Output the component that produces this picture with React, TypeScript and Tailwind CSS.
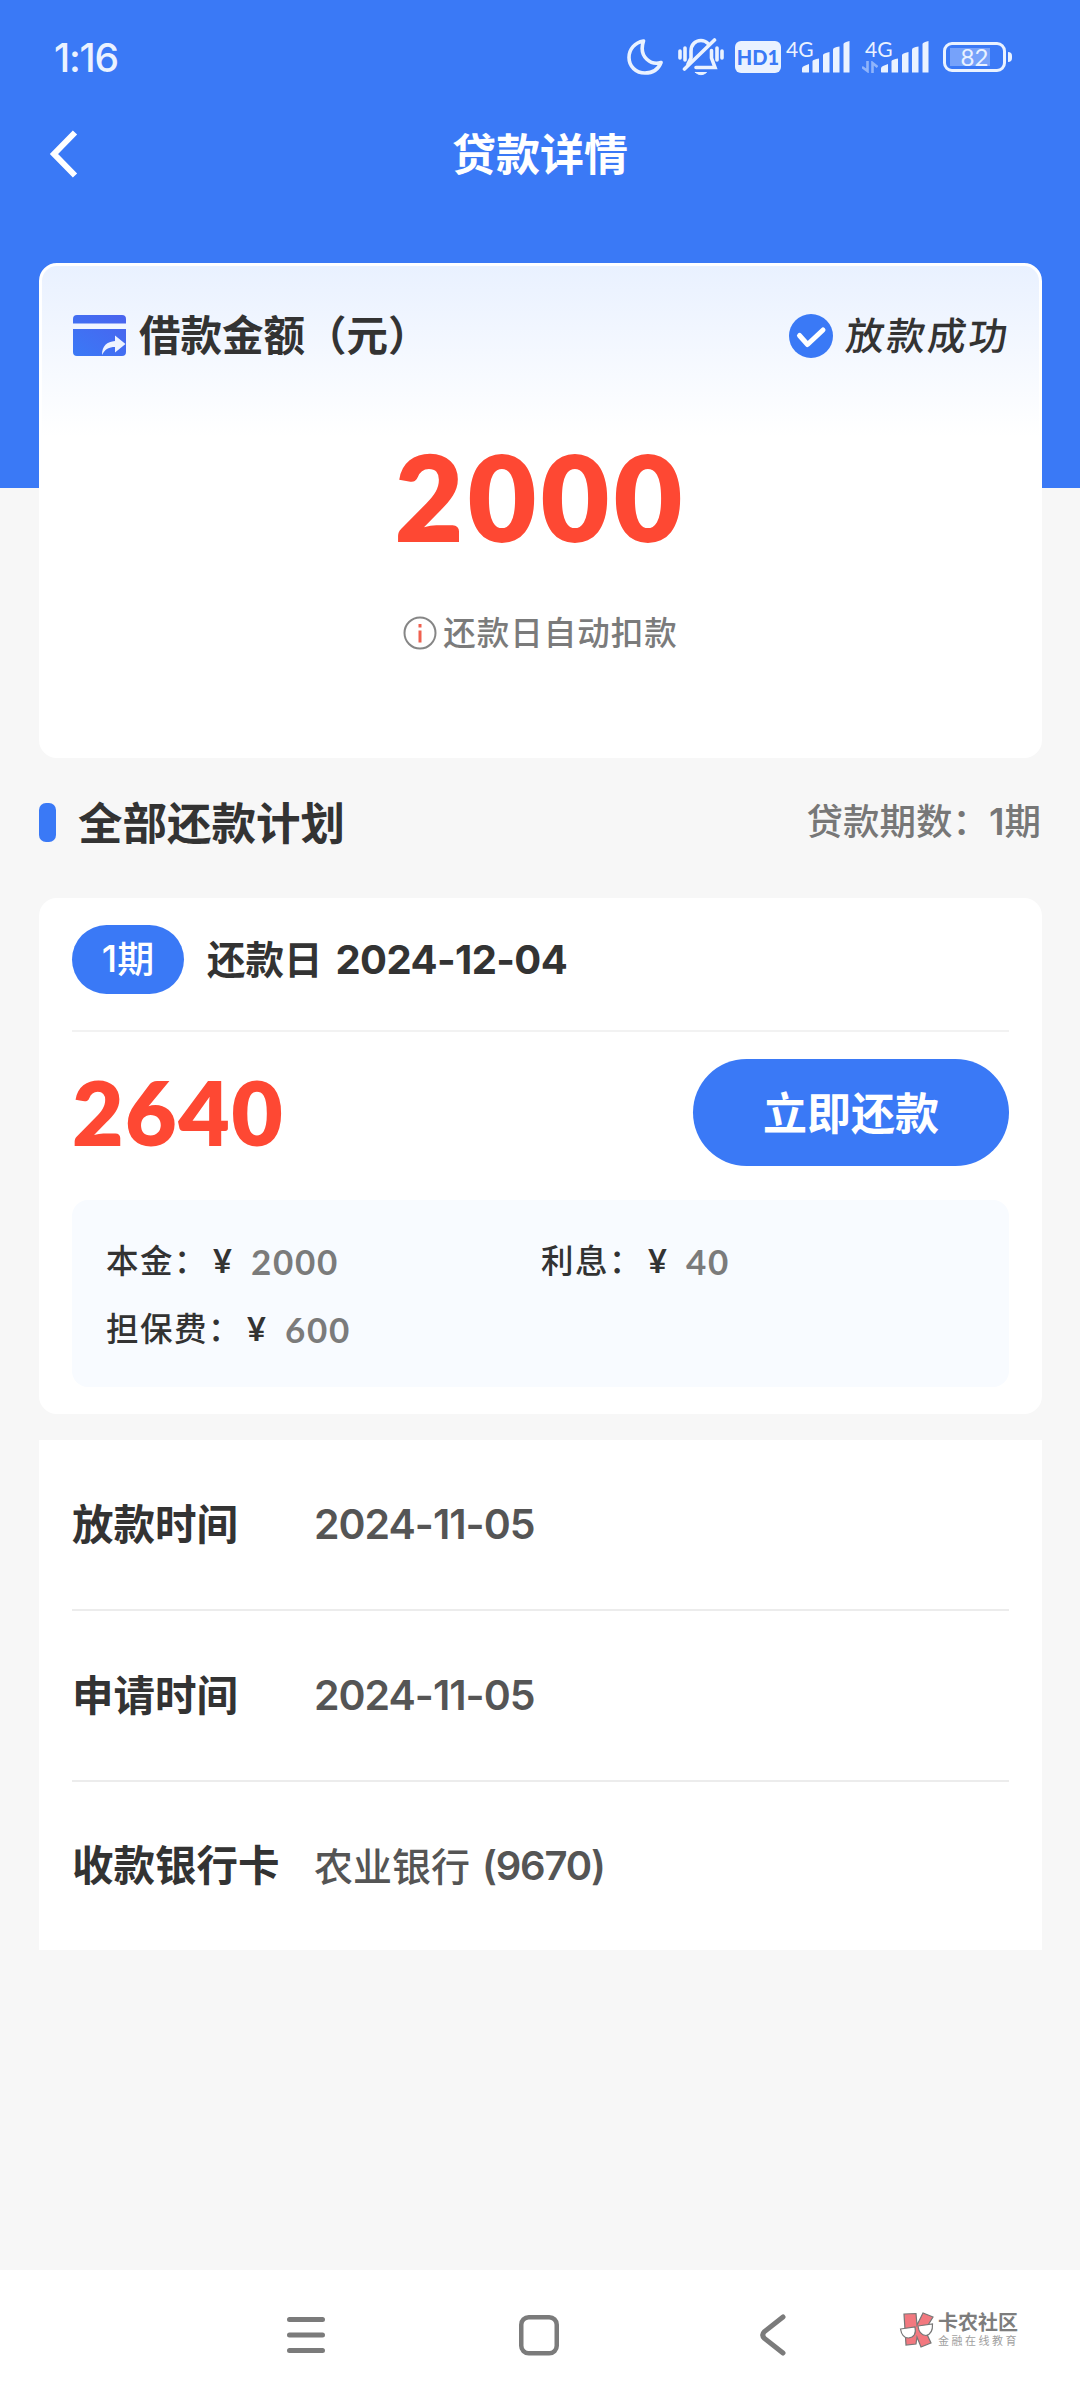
import React from "react";

const fees = [
  { label: "本金", value: "2000" },
  { label: "利息", value: "40" },
  { label: "担保费", value: "600" },
];

const infos = [
  { label: "放款时间", value: "2024-11-05" },
  { label: "申请时间", value: "2024-11-05" },
];

const Signal = () => (
  <svg width="48" height="32" viewBox="0 0 48 32" fill="#eaf2ff">
    <path d="M0 31V27.500Q0 25.500 2 25L7 23V31Q7 31.500 6.500 31.500H.5Z" />
    <path d="M10.500 31.500V20Q11 18.500 17 17.500V31.500Z" />
    <path d="M21 31.500V14Q21 12.500 27.500 11V31.500Z" />
    <path d="M31 31.500V8.500Q31 6.500 37.500 5.500V31.500Z" />
    <path d="M41.500 31.500V3Q41.500 1.500 47.500 0V31.500Z" />
  </svg>
);

const StatusBar = () => {
  return (
    <div className="flex items-center h-[114px] pl-[54px] pr-[68px] text-[#eaf2ff]">
      <span className="font-['Inter'] text-[39px] leading-none font-medium tracking-[-1.200px]">1:16</span>
      <div className="flex items-center ml-auto">
        <svg width="36" height="36" viewBox="0 0 36 36" fill="none" stroke="#eaf2ff" strokeWidth="3.600" strokeLinejoin="round">
          <path d="M16.500 2C8 3.500 2 10 2 18.500C2 27.500 9 34 18 34C25.500 34 31.500 30 34 23.500C25 26.500 11 19 16.500 2Z" />
        </svg>
        <svg className="ml-[15px]" width="46" height="38" viewBox="0 0 46 38" fill="none" stroke="#eaf2ff" strokeWidth="3.600" strokeLinecap="round">
          <path d="M2 13V20M7 10V22M39 10V22M44 13V20" />
          <path d="M13 20V13C13 7 17 2.500 23 2.500C26 2.500 28 3.500 30 5.500M33.500 12.500V20L37 29.500H18M13 20L10 26" />
          <path d="M6.500 31L36.500 2" />
          <path d="M17.500 34.500H28.500Q23 39 17.500 34.500Z" fill="#eaf2ff" strokeWidth="1" />
        </svg>
        <span className="flex items-center justify-center ml-[11px] w-[46px] h-[32px] rounded-[6px] bg-[#eaf2ff] text-[#3a79f6] text-[20px] leading-none font-black">HD1</span>
        <div className="relative ml-[21px] h-[32px]">
          <span className="absolute left-[-16px] top-[-3px] text-[21px] leading-none">4G</span>
          <Signal />
        </div>
        <div className="relative ml-[31px] h-[32px]">
          <span className="absolute left-[-16px] top-[-3px] text-[21px] leading-none">4G</span>
          <svg className="absolute left-[-19px] top-[20px]" width="16" height="12" viewBox="0 0 16 12" fill="none" stroke="#8fb4fb" strokeWidth="2.600">
            <path d="M0 6L5.500 10V0M15.500 6L10.500 2V12" />
          </svg>
          <Signal />
        </div>
        <div className="relative flex items-center justify-center ml-[14px] w-[63px] h-[30px] border-[3px] border-[#eaf2ff] rounded-[9px]">
          <span className="absolute left-[4px] top-[3px] w-[40px] h-[18px] bg-[#76a2fa]" />
          <span className="relative text-[24px] leading-none">82</span>
        </div>
        <span className="w-[4px] h-[10px] ml-[2px] rounded-r bg-[#eaf2ff]" />
      </div>
    </div>
  );
};

const NavBar = () => {
  return (
    <div className="relative flex items-center h-[130px] bg-white">
      <svg className="ml-[286px]" width="40" height="38" viewBox="0 0 40 38" stroke="#7b7b7b" strokeWidth="5" strokeLinecap="round">
        <path d="M3.500 3.500H36.500M3.500 19H36.500M3.500 34.500H36.500" />
      </svg>
      <svg className="ml-[192px]" width="42" height="42" viewBox="0 0 42 42" fill="none" stroke="#7b7b7b" strokeWidth="4.500">
        <rect x="3.250" y="3.250" width="35.500" height="36" rx="7.500" />
      </svg>
      <svg className="ml-[199px]" width="28" height="42" viewBox="0 0 28 42" fill="none" stroke="#7b7b7b" strokeWidth="5" strokeLinecap="round">
        <path d="M24 3L5.500 17.500Q2 21 5.500 24.500L24 39" />
      </svg>
      <div className="absolute left-[899px] top-[42px] flex">
        <svg width="36" height="37" viewBox="0 0 36 37" stroke="#777" strokeWidth="1.200">
          <path d="M5 2L17 1.500L18 13L24 1L34 5L26 18L32 31L22 35L18 25L17 32L7 33Z" fill="#f2787f" />
          <path d="M1.500 17L16 15Q18 25 9.500 26Q3 26 1.500 17ZM19 14L33.500 12Q34 22 27 23.500Q20 23 19 14Z" fill="#fff" />
        </svg>
        <div className="flex flex-col ml-[3px]">
          <span className="text-[20px] leading-[20px] font-bold text-[#7d7d7d] whitespace-nowrap">卡农社区</span>
          <span className="mt-[2px] text-[11px] leading-[13px] tracking-[2.500px] text-[#a0a0a0] whitespace-nowrap">金融在线教育</span>
        </div>
      </div>
    </div>
  );
};

const App = () => {
  return (
    <div className="flex flex-col w-[1080px] h-[2400px] bg-[#f7f7f7] text-[#333] font-['Lato','Noto_Sans_CJK_SC',sans-serif]">
      <div className="h-[488px] bg-[#3a79f6]">
        <StatusBar />
        <div className="grid grid-cols-3 items-center h-[80px] text-white">
          <svg className="ml-[48px]" width="32" height="50" viewBox="0 0 32 50" fill="none" stroke="#fff" strokeWidth="6">
            <path d="M27 3.500L6 25L27 46.500" />
          </svg>
          <h1 className="text-[44px] leading-none font-bold text-center">贷款详情</h1>
        </div>

        <div className="mx-[39px] mt-[69px] h-[495px] w-[1003px] rounded-[18px] border-[3px] border-white bg-white bg-linear-to-b from-[#e9f1ff] to-white to-35%">
          <div className="flex items-center h-[139px] pl-[31px] pr-[29px]">
            <svg width="53" height="41" viewBox="0 0 53 41">
              <defs>
                <linearGradient id="wallet" x1="0" y1="1" x2="1" y2="0">
                  <stop offset="0" stopColor="#3a79f6" />
                  <stop offset="1" stopColor="#4a63ee" />
                </linearGradient>
              </defs>
              <path d="M4 0H49Q53 0 53 4V8.500H0V4Q0 0 4 0ZM0 14H53V37Q53 41 49 41H4Q0 41 0 37Z" fill="url(#wallet)" />
              <path d="M29 40C29 31 34 26.500 42 26V20.500L52.500 29L42 37.500V32C36 32 32 34 29 40Z" fill="#edf3ff" />
            </svg>
            <span className="ml-[13px] text-[41.500px] leading-none font-bold">借款金额（元）</span>
            <svg className="ml-auto" width="44" height="44" viewBox="0 0 44 44">
              <circle cx="22" cy="22" r="22" fill="#3a79f6" />
              <path d="M10.500 21.500L18.500 30.500L34 16" fill="none" stroke="#fff" strokeWidth="5" strokeLinecap="round" strokeLinejoin="round" />
            </svg>
            <span className="ml-[13px] text-[38.500px] leading-none font-medium tracking-[2.500px] -skew-x-6">放款成功</span>
          </div>
          <div className="mt-[31px] text-[119px] leading-[120px] font-extrabold text-center tabular-nums tracking-[4px] text-[#fe4833]">2000</div>
          <div className="flex items-center justify-center mt-[60px] text-[32.500px] leading-none font-medium tracking-[1px] text-[#7b7b7b]">
            <svg className="mr-[6px]" width="34" height="34" viewBox="0 0 34 34" fill="none">
              <circle cx="17" cy="17" r="15.500" stroke="#868686" strokeWidth="2" />
              <path d="M17 14.500V26.500M17 8V11.500" stroke="#f0604f" strokeWidth="3" />
            </svg>
            还款日自动扣款
          </div>
        </div>
      </div>

      <div className="flex items-center h-[140px] mt-[270px] pl-[39px] pr-[39px]">
        <span className="w-[17px] h-[39px] mb-[11px] rounded-[7px] bg-[#3a79f6]" />
        <h2 className="ml-[22px] mb-[9px] text-[44.500px] leading-none font-bold">全部还款计划</h2>
        <span className="ml-auto mb-[13px] text-[36.500px] leading-none font-medium text-[#777]">
          贷款期数：<span className="font-['Inter'] font-semibold">1</span>期
        </span>
      </div>

      <div className="ml-[39px] mr-[38px] h-[516px] px-[33px] rounded-[18px] bg-white">
        <div className="flex items-center h-[134px] pb-[10px] border-b-2 border-[#f2f2f2]">
          <span className="flex items-center justify-center w-[112px] h-[69px] pb-[2px] rounded-full bg-[#3a79f6] text-white text-[37px] leading-none font-medium">
            <span className="font-['Inter']">1</span>期
          </span>
          <span className="ml-[23px] text-[38.500px] leading-none font-bold">还款日</span>
          <span className="ml-[13px] mt-[2px] font-['Inter'] text-[40px] leading-none font-bold tracking-[-0.600px]">2024-12-04</span>
        </div>
        <div className="flex items-center justify-between h-[168px] pb-[7px]">
          <span className="mt-[-3px] text-[89px] leading-none font-extrabold tabular-nums tracking-[1.500px] text-[#fe4833]">2640</span>
          <button className="w-[316px] h-[107px] rounded-full bg-[#3a79f6] text-white text-[44px] leading-none font-bold">立即还款</button>
        </div>
        <div className="grid grid-cols-[435px_1fr] content-center h-[187px] pl-[34px] rounded-[16px] bg-[#f8fbff]">
          {fees.map((item) => (
            <div className="flex items-center h-[68px] pt-[3px] text-[32.500px] leading-none font-medium tracking-[1.500px]" key={item.label}>
              <span>{item.label}：</span>
              <span className="ml-[5px] w-[38px] font-bold">¥</span>
              <span className="text-[35px] font-bold tabular-nums tracking-[1.700px] text-[#7b7b7b]">{item.value}</span>
            </div>
          ))}
        </div>
      </div>

      <div className="ml-[39px] mr-[38px] mt-[26px] px-[33px] bg-white">
        {infos.map((item) => (
          <div className="flex items-center h-[171px] border-b-2 border-[#ececec]" key={item.label}>
            <span className="w-[242px] text-[41.500px] leading-none font-bold">{item.label}</span>
            <span className="font-['Inter'] text-[41px] leading-none font-semibold tracking-[-1px] text-[#555]">{item.value}</span>
          </div>
        ))}
        <div className="flex items-center h-[168px]">
          <span className="w-[242px] text-[41.500px] leading-none font-bold">收款银行卡</span>
          <span className="text-[39px] leading-none font-medium text-[#555]">农业银行</span>
          <span className="ml-[12px] font-['Inter'] text-[40px] leading-none font-semibold tracking-[-1.200px] text-[#555]">(9670)</span>
        </div>
      </div>

      <div className="mt-auto">
        <NavBar />
      </div>
    </div>
  );
};

export default App;
